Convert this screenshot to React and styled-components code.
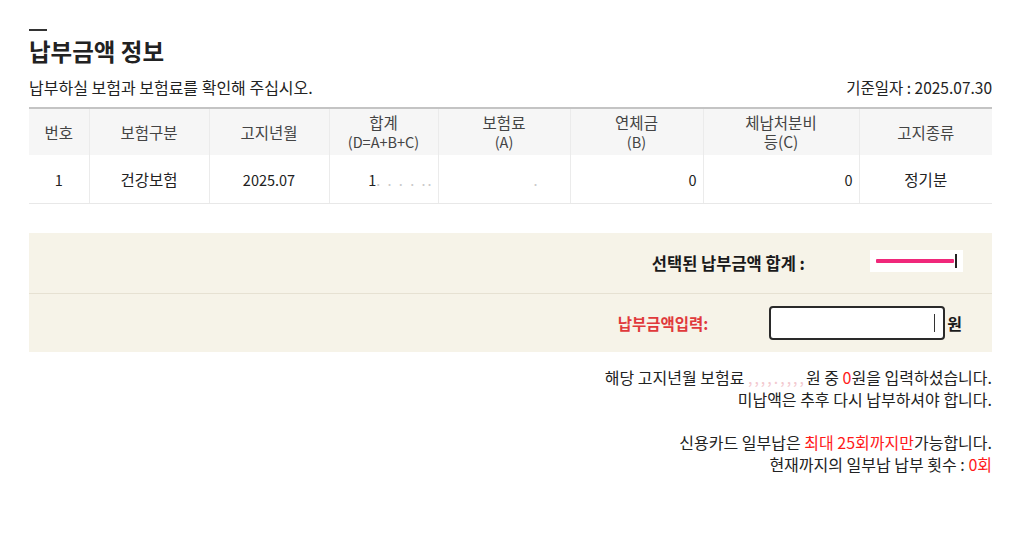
import styled, { createGlobalStyle } from "styled-components";

const GlobalStyle = createGlobalStyle`
  html, body {
    margin: 0;
    padding: 0;
    background: #ffffff;
  }
  body {
    font-family: "Noto Sans CJK KR", "Noto Sans", sans-serif;
    color: #222222;
  }
`;

const Page = styled.div`
  padding: 29px 32px 40px 29px;
`;

const Marker = styled.div`
  width: 18px;
  height: 2px;
  background-color: #333333;
`;

const Title = styled.h2`
  margin: 5px 0 0;
  font-size: 23.5px;
  font-weight: 700;
  line-height: 30px;
  color: #222222;
`;

const SubRow = styled.div`
  display: flex;
  justify-content: space-between;
  align-items: center;
  margin-top: 11px;
  font-size: 16px;
  line-height: 20px;
`;

const DateText = styled.span`
  font-size: 15.5px;
`;

const Table = styled.table`
  width: 100%;
  margin-top: 10px;
  border-collapse: collapse;
  table-layout: fixed;
  border-top: 2px solid #c4c4c4;
  font-size: 15.5px;

  th {
    height: 46px;
    padding: 0;
    background-color: #f6f6f6;
    color: #444444;
    font-weight: 400;
    line-height: 20px;
    text-align: center;
    border-left: 1px solid #ebebeb;
  }

  td {
    height: 48px;
    padding: 0;
    text-align: center;
    border-left: 1px solid #ebebeb;
    border-bottom: 1px solid #e8e8e8;
  }

  th:first-child,
  td:first-child {
    border-left: none;
  }
`;

const HeadLine = styled.div`
  line-height: 19px;
  font-size: ${(p) => p.$size || 15.5}px;
`;

const Digits = styled.span`
  font-size: 14.5px;
`;

const Num = styled.td`
  && {
    text-align: right;
    padding-right: ${(p) => p.$pad || 6}px;
    font-size: 14.5px;
  }
`;

const Faint = styled.span`
  color: #c9c9c9;
  letter-spacing: 2px;
`;

const Summary = styled.div`
  margin-top: 29px;
  background-color: #f6f3e8;
`;

const SumRow = styled.div`
  display: flex;
  justify-content: flex-end;
  align-items: center;
  height: ${(p) => p.$h}px;
  padding-right: ${(p) => p.$pr}px;
  border-top: ${(p) => (p.$divider ? "1px solid #e6e1d2" : "none")};
`;

const SumLabel = styled.span`
  font-size: ${(p) => p.$size}px;
  font-weight: 700;
  color: ${(p) => (p.$red ? "#e0393b" : "#1a1a1a")};
  margin-right: ${(p) => p.$gap}px;
`;

const MaskBox = styled.span`
  display: flex;
  align-items: center;
  width: 93px;
  height: 22px;
  margin-top: -4px;
  background-color: #ffffff;
  box-sizing: border-box;
  padding: 0 6px;

  &::before {
    content: "";
    display: block;
    flex: 1;
    height: 4px;
    background-color: #f0287a;
    border-radius: 1px;
  }

  &::after {
    content: "";
    display: block;
    width: 2px;
    height: 14px;
    margin-left: 1px;
    background-color: #222222;
  }
`;

const InputWrap = styled.span`
  position: relative;
  display: flex;

  &::after {
    content: "";
    position: absolute;
    right: 10px;
    top: 8px;
    width: 1px;
    height: 18px;
    background-color: #333333;
  }
`;

const AmountInput = styled.input`
  width: 176px;
  height: 34px;
  box-sizing: border-box;
  border: 2px solid #2a2a2a;
  border-radius: 4px;
  background-color: #ffffff;
  padding: 0 9px;
  text-align: right;
  font-size: 14px;
  font-family: inherit;
  outline: none;
`;

const Unit = styled.span`
  margin-left: 2px;
  font-size: 16px;
  font-weight: 700;
  color: #1a1a1a;
`;

const Notes = styled.div`
  margin-top: 15px;
  text-align: right;
  font-size: 16px;
  line-height: 21.7px;
  color: #222222;
`;

const Red = styled.span`
  color: #ff1a1a;
`;

const Hidden = styled.span`
  color: #f3c9cf;
  letter-spacing: 2px;
`;

const cols = [60, 120, 120, 109, 132, 133, 156, 133];

const heads = [
  ["번호"],
  ["보험구분"],
  ["고지년월"],
  ["합계", "(D=A+B+C)"],
  ["보험료", "(A)"],
  ["연체금", "(B)"],
  ["체납처분비", "등(C)"],
  ["고지종류"],
];

export default function App() {
  return (
    <>
      <GlobalStyle />
      <Page>
        <Marker />
        <Title>납부금액 정보</Title>
        <SubRow>
          <span>납부하실 보험과 보험료를 확인해 주십시오.</span>
          <DateText>기준일자 : 2025.07.30</DateText>
        </SubRow>

        <Table>
          <colgroup>
            {cols.map((w, i) => (
              <col key={i} style={{ width: w }} />
            ))}
          </colgroup>
          <thead>
            <tr>
              {heads.map((lines, i) => (
                <th key={i}>
                  {lines.map((l, j) => (
                    <HeadLine key={j} $size={j === 1 && i < 6 ? 14.5 : 15.5}>
                      {l}
                    </HeadLine>
                  ))}
                </th>
              ))}
            </tr>
          </thead>
          <tbody>
            <tr>
              <td>
                <Digits>1</Digits>
              </td>
              <td>건강보험</td>
              <td>
                <Digits>2025.07</Digits>
              </td>
              <Num $pad={4}>
                1<Faint>. . . . ..</Faint>
              </Num>
              <Num $pad={30}>
                <Faint>.</Faint>
              </Num>
              <Num>0</Num>
              <Num>0</Num>
              <td>정기분</td>
            </tr>
          </tbody>
        </Table>

        <Summary>
          <SumRow $h={60} $pr={29}>
            <SumLabel $size={16.5} $gap={65}>
              선택된 납부금액 합계 :
            </SumLabel>
            <MaskBox />
          </SumRow>
          <SumRow $h={58} $pr={30} $divider>
            <SumLabel $size={15.5} $gap={61} $red>
              납부금액입력:
            </SumLabel>
            <InputWrap>
              <AmountInput type="text" />
            </InputWrap>
            <Unit>원</Unit>
          </SumRow>
        </Summary>

        <Notes>
          <div>
            해당 고지년월 보험료 <Hidden>,,,,.,,,,</Hidden>원 중 <Red>0</Red>
            원을 입력하셨습니다.
          </div>
          <div>미납액은 추후 다시 납부하셔야 합니다.</div>
          <br />
          <div>
            신용카드 일부납은 <Red>최대 25회까지만</Red>가능합니다.
          </div>
          <div>
            현재까지의 일부납 납부 횟수 : <Red>0회</Red>
          </div>
        </Notes>
      </Page>
    </>
  );
}
